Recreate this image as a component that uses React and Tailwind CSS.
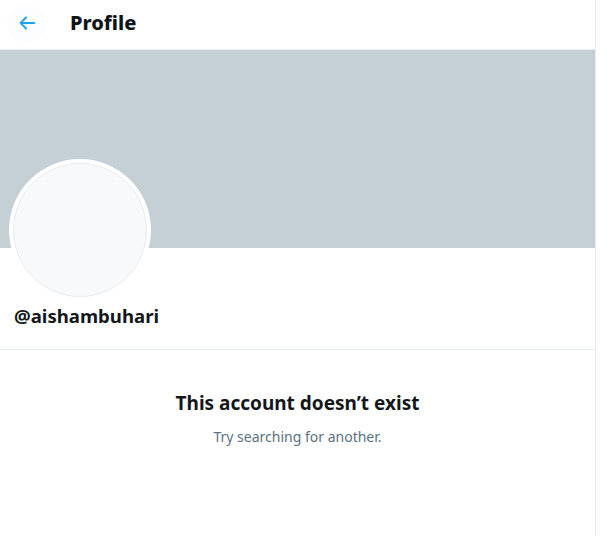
import React from "react";

// Back arrow, same shape as the Twitter one
const BackArrow = () => (
  <svg viewBox="0 0 24 24" className="h-[22px] w-[22px] fill-[#1da1f2]" aria-hidden="true">
    <path d="M20 11H7.414l4.293-4.293c.39-.39.39-1.023 0-1.414s-1.023-.39-1.414 0l-6 6c-.39.39-.39 1.023 0 1.414l6 6c.195.195.45.293.707.293s.512-.098.707-.293c.39-.39.39-1.023 0-1.414L7.414 13H20c.553 0 1-.447 1-1s-.447-1-1-1z" />
  </svg>
);

export default function App() {
  return (
    <div
      className="h-[536px] w-[609px] overflow-hidden bg-white"
      style={{ fontFamily: '"Noto Sans", "Open Sans", sans-serif' }}
    >
      <div className="h-full w-[596px] border-r border-[#e6ecf0]">
        {/* Header */}
        <div className="flex h-[50px] items-center border-b border-[#e6ecf0] px-[7px] pb-[3px]">
          <div className="flex h-[39px] w-[39px] items-center justify-center rounded-full bg-[#fcfdfe]">
            <BackArrow />
          </div>
          <h2 className="ml-[24px] text-[20px] font-extrabold text-[#0f1419]">Profile</h2>
        </div>

        {/* Banner */}
        <div className="h-[198px] bg-[#c4cfd6]" />

        {/* Avatar + handle */}
        <div className="border-b border-[#e6ecf0] px-[9px] pb-[20px]">
          <div className="-mt-[89px] h-[142px] w-[142px] rounded-full bg-white p-[4px]">
            <div className="h-full w-full rounded-full border border-[#e6ecf0] bg-[#f7f9fa]" />
          </div>
          <div className="mt-[2px] pl-[5px] text-[18.6px] font-bold leading-[26px] text-[#14171a]">
            @aishambuhari
          </div>
        </div>

        {/* Empty state */}
        <div className="flex flex-col items-center pt-[40px]">
          <h3 className="text-[19px] font-bold leading-[26px] text-[#14171a]">
            This account doesn’t exist
          </h3>
          <p className="mt-[11px] text-[14px] leading-[20px] text-[#5b7083]">
            Try searching for another.
          </p>
        </div>
      </div>
    </div>
  );
}
